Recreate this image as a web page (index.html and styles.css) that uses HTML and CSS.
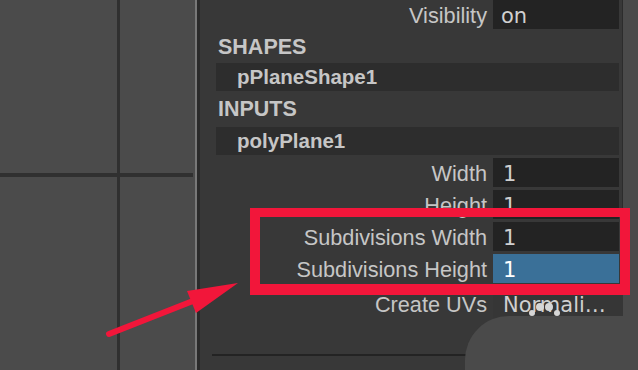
FILE: index.html
```html
<!DOCTYPE html>
<html lang="en">

<head>
    <meta charset="UTF-8">
    <meta name="viewport" content="width=device-width, initial-scale=1.0">
    <title>Attribute Editor - polyPlane1</title>
    <link rel="stylesheet" href="styles.css">
</head>

<body>

    <div class="app">
        <!-- viewport panes on the left -->
        <div class="viewport">
            <div class="pane"></div>
            <div class="pane"></div>
            <div class="pane"></div>
            <div class="pane"></div>
        </div>
        <div class="divider"></div>

        <section class="editor">
            <div class="attr attr-first">
                <span class="label">Visibility</span>
                <span class="field">on</span>
            </div>

            <div class="section-title title-shapes">SHAPES</div>
            <div class="node">pPlaneShape1</div>

            <div class="section-title title-inputs">INPUTS</div>
            <div class="node">polyPlane1</div>

            <div class="attr attr-width">
                <span class="label">Width</span>
                <span class="field">1</span>
            </div>
            <div class="attr">
                <span class="label">Height</span>
                <span class="field">1</span>
            </div>
            <div class="attr">
                <span class="label">Subdivisions Width</span>
                <span class="field">1</span>
            </div>
            <div class="attr">
                <span class="label">Subdivisions Height</span>
                <span class="field field-active">1</span>
            </div>
            <div class="attr attr-menu">
                <span class="label">Create UVs</span>
                <span class="menu">Normali…</span>
            </div>

            <div class="rule"></div>
        </section>

        <div class="strip"></div>
    </div>

    <!-- overlays: cursor bubble, highlight box and arrow -->
    <div class="bubble"></div>
    <div class="callout"></div>
    <svg class="annot" width="638" height="370" viewBox="0 0 638 370">
        <g fill="#d6d6d6">
            <circle cx="532" cy="313" r="3"/>
            <circle cx="540" cy="307" r="4"/>
            <circle cx="549" cy="307" r="4"/>
            <circle cx="557" cy="313" r="3"/>
        </g>
        <line x1="109" y1="334" x2="198" y2="299" stroke="#f2163a" stroke-width="6" stroke-linecap="round"/>
        <polygon points="238,283 187,291 196,313" fill="#f2163a"/>
    </svg>

</body>

</html>
```

FILE: styles.css
```css
body, html {
    margin: 0;
    padding: 0;
    width: 638px;
    height: 370px;
    overflow: hidden;
    background: #383838;
    font-family: 'Liberation Sans', Arial, sans-serif;
}

.app {
    display: flex;
    height: 370px;
}

.viewport {
    width: 193px;
    padding-right: 2px;
    border-right: 2px solid #787878;
    display: grid;
    grid-template-columns: 117px 1fr;
    grid-template-rows: 173px 1fr;
    gap: 4px 3px;
    background-clip: content-box;
    background-color: #303030;
    box-shadow: inset -2px 0 0 #4b4b4b;
}

.pane {
    background: #4b4b4b;
}

.divider {
    width: 3px;
    background: #2a2a2a;
}

.editor {
    width: 403px;
    padding: 0 3px 0 16px;
    background: #383838;
    border-right: 1px solid #2c2c2c;
    display: flex;
    flex-direction: column;
    color: #c6c6c6;
}

.strip {
    flex: 1;
    background: #4a4a4a;
}

.attr {
    display: grid;
    grid-template-columns: 1fr 126px;
    gap: 6px;
    height: 28px;
    margin-top: 4px;
    align-items: center;
    font-size: 21.7px;
}

.attr-first {
    height: 26px;
    margin-top: 0;
}

.attr-width {
    margin-top: 3px;
}

.attr-menu {
    height: 30px;
    margin-top: 6px;
}

.label {
    text-align: right;
    white-space: nowrap;
    padding-top: 3px;
}

.field,
.menu {
    box-sizing: border-box;
    height: 100%;
    display: flex;
    align-items: center;
    padding: 3px 0 0 10px;
    background: #232323;
    color: #d0d0d0;
    font-family: 'DejaVu Sans', sans-serif;
    font-size: 21px;
}

.attr-first .field {
    padding-left: 8px;
}

.field-active {
    background: #3a7098;
    color: #fff;
}

.menu {
    background: #363636;
    margin-right: -4px;
    white-space: nowrap;
}

.section-title {
    font-weight: bold;
    font-size: 21.5px;
    padding-left: 2px;
    display: flex;
    align-items: center;
}

.title-shapes {
    height: 32px;
    margin-top: 5px;
}

.title-inputs {
    height: 36px;
}

.node {
    height: 28px;
    background: #2d2d2d;
    padding-left: 21px;
    display: flex;
    align-items: center;
    font-weight: bold;
    font-size: 20.5px;
}

.rule {
    margin-top: 36px;
    margin-left: -4px;
    height: 2px;
    background: #232323;
}

.bubble {
    position: absolute;
    left: 465px;
    top: 316px;
    width: 173px;
    height: 54px;
    border-top-left-radius: 44px;
    background: #4a4a4a;
}

.callout {
    position: absolute;
    left: 250px;
    top: 208px;
    width: 380px;
    height: 87px;
    box-sizing: border-box;
    border-style: solid;
    border-color: #f2163a;
    border-width: 9px 10px 11px 10px;
}

.annot {
    position: absolute;
    left: 0;
    top: 0;
}
```
